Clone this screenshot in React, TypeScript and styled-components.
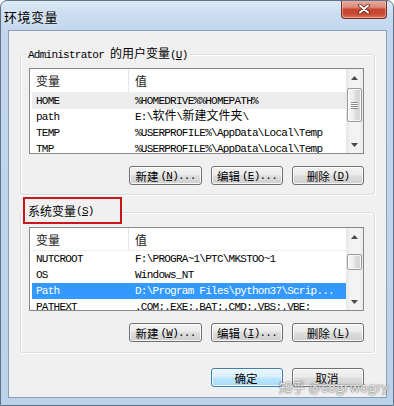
import React from "react";
import styled, { createGlobalStyle } from "styled-components";

const UI = `"Noto Sans CJK SC", "Noto Sans", sans-serif`;
const MONO = `"Liberation Mono", "Noto Sans CJK SC", monospace`;

const Global = createGlobalStyle`
  html, body { margin: 0; padding: 0; background: #ffffff; }
  body { width: 394px; height: 406px; overflow: hidden; }
  * { box-sizing: border-box; }
`;

const Window = styled.div`
  position: relative;
  width: 394px;
  height: 406px;
  display: flex;
  flex-direction: column;
  border: 1px solid #5f7389;
  border-radius: 7px 7px 0 0;
  background: linear-gradient(180deg, #dde9f6 0px, #c9dcf0 14px, #c2d7ee 30px, #bcd2ea 100%);
  overflow: hidden;
`;

const TitleBar = styled.div`
  height: 29px;
  flex: none;
  display: flex;
  align-items: flex-start;
  justify-content: space-between;
  padding: 0 6px 0 3px;
`;

const Title = styled.div`
  font-family: ${UI};
  font-size: 13px;
  line-height: 13px;
  letter-spacing: 0.5px;
  color: #000;
  margin-top: 9px;
  text-shadow: 0 0 6px rgba(255, 255, 255, 0.9);
`;

const CloseButton = styled.div`
  width: 46px;
  height: 19px;
  margin-top: -1px;
  display: flex;
  align-items: center;
  justify-content: center;
  border: 1px solid #7a2d22;
  border-top: none;
  border-radius: 0 0 4px 4px;
  background: linear-gradient(
    180deg,
    #eab2a6 0%,
    #dd8a78 40%,
    #c7442f 52%,
    #c94b34 80%,
    #dc7a5c 100%
  );
  box-shadow: inset 0 0 0 1px rgba(255, 220, 210, 0.45);
`;

const Client = styled.div`
  flex: 1;
  margin: 0 6px 7px 7px;
  border: 1px solid #8d9fb4;
  background: #f0f0f0;
  display: flex;
  flex-direction: column;
  padding: 23px 11px 10px 11px;
`;

const Group = styled.div<{ $mt: number; $pb: number }>`
  margin-top: ${(p) => p.$mt}px;
  border: 1px solid #d5dfe5;
  border-radius: 3px;
  box-shadow: inset 1px 1px 0 #ffffff, 1px 1px 0 #ffffff;
  padding: 0 10px ${(p) => p.$pb}px 8px;
  display: flex;
  flex-direction: column;
`;

const Legend = styled.div`
  align-self: flex-start;
  margin: -8px 0 0 -3px;
  padding: 0 2px;
  height: 14px;
  line-height: 14px;
  background: #f0f0f0;
  font-family: ${MONO};
  font-size: 11px;
  letter-spacing: -0.75px;
  color: #000;
  white-space: nowrap;
`;

const MarkedLegend = styled.div`
  align-self: flex-start;
  margin: -16px 0 0 -6px;
  width: 99px;
  height: 27px;
  border: 2px solid #c8161d;
  background: #f0f0f0;
  padding: 0 0 0 3px;
  display: flex;
  align-items: center;
  font-family: ${MONO};
  font-size: 11px;
  letter-spacing: -0.75px;
  color: #000;
  white-space: nowrap;
`;

const Han = styled.span`
  font-family: ${UI};
  font-size: 12px;
  letter-spacing: 0;
  line-height: 1;
`;

const Accel = styled.span`
  text-decoration: underline;
  text-underline-offset: 1px;
`;

const ListBox = styled.div<{ $mt: number; $h: number }>`
  margin-top: ${(p) => p.$mt}px;
  height: ${(p) => p.$h}px;
  border: 1px solid #828790;
  background: #ffffff;
  display: flex;
  overflow: hidden;
`;

const ListBody = styled.div`
  flex: 1;
  min-width: 0;
  display: flex;
  flex-direction: column;
  overflow: hidden;
`;

const Header = styled.div<{ $h: number }>`
  height: ${(p) => p.$h}px;
  flex: none;
  display: grid;
  grid-template-columns: 99px 1fr;
  border-bottom: 1px solid #eef0f3;
  font-family: ${UI};
  font-size: 12px;
  color: #1a1a1a;
`;

const HeadCell = styled.div<{ $sep?: boolean }>`
  display: flex;
  align-items: center;
  padding-left: 6px;
  border-right: ${(p) => (p.$sep ? "1px solid #e2e6eb" : "none")};
`;

const Row = styled.div<{ $state?: "selected" | "focus" }>`
  height: 16px;
  flex: none;
  margin-left: 2px;
  padding-left: 4px;
  display: grid;
  grid-template-columns: 99px 1fr;
  align-items: center;
  font-family: ${MONO};
  font-size: 11px;
  letter-spacing: -0.75px;
  line-height: 16px;
  white-space: nowrap;
  color: ${(p) => (p.$state === "selected" ? "#ffffff" : "#000000")};
  background: ${(p) =>
    p.$state === "selected" ? "#3399ff" : p.$state === "focus" ? "#ececec" : "transparent"};
`;

const Cell = styled.div`
  min-width: 0;
`;

const ScrollBar = styled.div`
  width: 17px;
  flex: none;
  display: flex;
  flex-direction: column;
  background: linear-gradient(90deg, #e6e6e6 0%, #f2f2f2 25%, #f4f4f4 75%, #e9e9e9 100%);
`;

const Arrow = styled.div`
  height: 17px;
  flex: none;
  display: flex;
  align-items: center;
  justify-content: center;
`;

const Track = styled.div`
  flex: 1;
  display: flex;
  flex-direction: column;
`;

const Thumb = styled.div<{ $top: number; $h: number }>`
  margin: ${(p) => p.$top}px 0 0 1px;
  width: 15px;
  height: ${(p) => p.$h}px;
  border: 1px solid #9b9b9b;
  border-radius: 2px;
  background: linear-gradient(90deg, #f6f6f6 0%, #ececec 45%, #dcdcdc 55%, #d4d4d4 100%);
  box-shadow: inset 0 0 0 1px rgba(255, 255, 255, 0.75);
  display: flex;
  align-items: center;
  justify-content: center;
  &::after {
    content: "";
    width: 7px;
    height: 7px;
    background: repeating-linear-gradient(180deg, #8c8c8c 0 1px, #f8f8f8 1px 2px);
    display: ${(p) => (p.$h >= 18 ? "block" : "none")};
  }
`;

const ButtonRow = styled.div<{ $mt: number }>`
  margin-top: ${(p) => p.$mt}px;
  display: flex;
  justify-content: flex-end;
  gap: 9px;
`;

const Button = styled.div<{ $primary?: boolean; $w?: number }>`
  width: ${(p) => p.$w ?? 73}px;
  height: 19px;
  border: 1px solid ${(p) => (p.$primary ? "#3c7fb1" : "#707070")};
  border-radius: 3px;
  background: ${(p) =>
    p.$primary
      ? "linear-gradient(180deg, #eaf6fd 0%, #d9f0fc 45%, #bee6fd 52%, #a7d9f5 100%)"
      : "linear-gradient(180deg, #f2f2f2 0%, #ebebeb 45%, #dddddd 52%, #cfcfcf 100%)"};
  box-shadow: inset 0 0 0 1px rgba(255, 255, 255, 0.8);
  display: flex;
  align-items: center;
  justify-content: center;
  font-family: ${MONO};
  font-size: 11px;
  letter-spacing: -0.75px;
  color: #000;
  white-space: nowrap;
`;

const BtnHan = styled.span`
  font-family: ${UI};
  font-size: 11.5px;
  letter-spacing: 0;
  margin-right: 2px;
`;

const Footer = styled.div`
  margin-top: 15px;
  padding-right: 11px;
  display: flex;
  justify-content: flex-end;
  gap: 9px;
`;

const Watermark = styled.div`
  position: absolute;
  left: 278px;
  top: 378px;
  font-family: ${UI};
  font-size: 13px;
  line-height: 16px;
  color: rgba(255, 255, 255, 0.85);
  text-shadow: 0 0 1px #6b6b6b, 0 0 2px rgba(80, 80, 80, 0.8);
  letter-spacing: 0.3px;
  white-space: nowrap;
`;

const CJK = /([\u2E80-\u9FFF\uFF00-\uFFEF]+)/;

function Mixed({ text }: { text: string }) {
  return (
    <>
      {text.split(CJK).map((part, i) =>
        part === "" ? null : CJK.test(part) ? <Han key={i}>{part}</Han> : <React.Fragment key={i}>{part}</React.Fragment>
      )}
    </>
  );
}

function UpArrow() {
  return (
    <svg width="7" height="4" viewBox="0 0 7 4">
      <path d="M3.5 0 L7 4 L0 4 Z" fill="#4a4a4a" />
    </svg>
  );
}

function DownArrow() {
  return (
    <svg width="7" height="4" viewBox="0 0 7 4">
      <path d="M0 0 L7 0 L3.5 4 Z" fill="#4a4a4a" />
    </svg>
  );
}

type Item = { name: string; value: string; state?: "selected" | "focus" };

function VarList(props: {
  items: Item[];
  mt: number;
  h: number;
  head: number;
  thumbTop: number;
  thumbH: number;
}) {
  return (
    <ListBox $mt={props.mt} $h={props.h}>
      <ListBody>
        <Header $h={props.head}>
          <HeadCell $sep>变量</HeadCell>
          <HeadCell>值</HeadCell>
        </Header>
        {props.items.map((it) => (
          <Row key={it.name} $state={it.state}>
            <Cell>{it.name}</Cell>
            <Cell>
              <Mixed text={it.value} />
            </Cell>
          </Row>
        ))}
      </ListBody>
      <ScrollBar>
        <Arrow>
          <UpArrow />
        </Arrow>
        <Track>
          <Thumb $top={props.thumbTop} $h={props.thumbH} />
        </Track>
        <Arrow>
          <DownArrow />
        </Arrow>
      </ScrollBar>
    </ListBox>
  );
}

function ActionButtons({ mt, keys }: { mt: number; keys: [string, string, string] }) {
  return (
    <ButtonRow $mt={mt}>
      <Button>
        <BtnHan>新建</BtnHan>(<Accel>{keys[0]}</Accel>)...
      </Button>
      <Button $w={72}>
        <BtnHan>编辑</BtnHan>(<Accel>{keys[1]}</Accel>)...
      </Button>
      <Button $w={72}>
        <BtnHan>删除</BtnHan>(<Accel>{keys[2]}</Accel>)
      </Button>
    </ButtonRow>
  );
}

const userVars: Item[] = [
  { name: "HOME", value: "%HOMEDRIVE%%HOMEPATH%", state: "focus" },
  { name: "path", value: "E:\\软件\\新建文件夹\\" },
  { name: "TEMP", value: "%USERPROFILE%\\AppData\\Local\\Temp" },
  { name: "TMP", value: "%USERPROFILE%\\AppData\\Local\\Temp" },
];

const sysVars: Item[] = [
  { name: "NUTCROOT", value: "F:\\PROGRA~1\\PTC\\MKSTOO~1" },
  { name: "OS", value: "Windows_NT" },
  { name: "Path", value: "D:\\Program Files\\python37\\Scrip...", state: "selected" },
  { name: "PATHEXT", value: ".COM;.EXE;.BAT;.CMD;.VBS;.VBE;" },
];

export default function App() {
  return (
    <>
      <Global />
      <Window>
        <TitleBar>
          <Title>环境变量</Title>
          <CloseButton>
            <svg width="12" height="10" viewBox="0 0 12 10">
              <path d="M2 1.5 L10 8.5 M10 1.5 L2 8.5" stroke="#5b1d12" strokeWidth="3.6" strokeLinecap="round" />
              <path d="M2 1.5 L10 8.5 M10 1.5 L2 8.5" stroke="#ffffff" strokeWidth="2" strokeLinecap="round" />
            </svg>
          </CloseButton>
        </TitleBar>
        <Client>
          <Group $mt={0} $pb={9}>
            <Legend>
              Administrator <Han>的用户变量</Han>(<Accel>U</Accel>)
            </Legend>
            <VarList items={userVars} mt={7} h={86} head={24} thumbTop={2} thumbH={34} />
            <ActionButtons mt={12} keys={["N", "E", "D"]} />
          </Group>
          <Group $mt={17} $pb={10}>
            <MarkedLegend>
              <Han>系统变量</Han>(<Accel>S</Accel>)
            </MarkedLegend>
            <VarList items={sysVars} mt={3} h={84} head={23} thumbTop={9} thumbH={16} />
            <ActionButtons mt={12} keys={["W", "I", "L"]} />
          </Group>
          <Footer>
            <Button $primary $w={72}>
              <BtnHan>确定</BtnHan>
            </Button>
            <Button $w={72}>
              <BtnHan>取消</BtnHan>
            </Button>
          </Footer>
        </Client>
        <Watermark>知乎 @sdgrwogry</Watermark>
      </Window>
    </>
  );
}
